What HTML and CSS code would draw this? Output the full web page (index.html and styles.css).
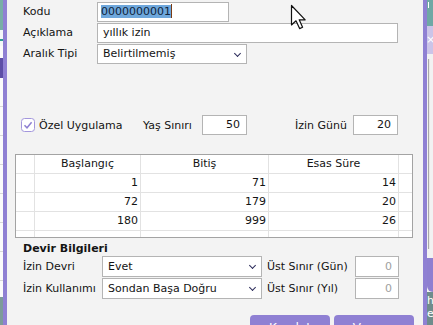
FILE: index.html
```html
<!DOCTYPE html>
<html lang="tr">
<head>
<meta charset="utf-8">
<link rel="stylesheet" href="styles.css">
</head>
<body>
<div class="screen">
  <div class="app-left">
    <div class="al-teal"></div>
    <div class="al-white"><div class="al-line"></div></div>
    <div class="al-purple"></div>
    <div class="al-list"></div>
    <div class="al-foot"></div>
  </div>
  <div class="dialog">
    <div class="fields">
      <span class="lbl">Kodu</span>
      <div class="input w-kodu"><span class="hl">0000000001</span><span class="caret"></span></div>
      <span class="lbl">Açıklama</span>
      <div class="input w-acik">yıllık izin</div>
      <span class="lbl">Aralık Tipi</span>
      <div class="input select w-aralik">Belirtilmemiş<span class="chev"></span></div>
    </div>

    <div class="opts">
      <span class="check"><svg viewBox="0 0 14 14" width="14" height="14"><rect x="0.5" y="0.5" width="13" height="13" rx="3" fill="#fff" stroke="#a396dc"/><path d="M3.5 7.2 L6 9.8 L10.6 4.2" fill="none" stroke="#8f80d2" stroke-width="1.5"/></svg></span>
      <span class="opt-lbl">Özel Uygulama</span>
      <span class="yas-lbl">Yaş Sınırı</span>
      <div class="input num w-num">50</div>
      <span class="gun-lbl">İzin Günü</span>
      <div class="input num w-num">20</div>
    </div>

    <div class="grid">
      <div class="g-row g-head">
        <div class="c c-ind"></div>
        <div class="c c1 center">Başlangıç</div>
        <div class="c c2 center">Bitiş</div>
        <div class="c c3 center">Esas Süre</div>
        <div class="c c-rest"></div>
      </div>
      <div class="g-row">
        <div class="c c-ind"></div>
        <div class="c c1">1</div>
        <div class="c c2">71</div>
        <div class="c c3">14</div>
        <div class="c c-rest"></div>
      </div>
      <div class="g-row">
        <div class="c c-ind"></div>
        <div class="c c1">72</div>
        <div class="c c2">179</div>
        <div class="c c3">20</div>
        <div class="c c-rest"></div>
      </div>
      <div class="g-row">
        <div class="c c-ind"></div>
        <div class="c c1">180</div>
        <div class="c c2">999</div>
        <div class="c c3">26</div>
        <div class="c c-rest"></div>
      </div>
      <div class="g-row g-empty">
        <div class="c c-ind"></div>
        <div class="c c1"></div>
        <div class="c c2"></div>
        <div class="c c3"></div>
        <div class="c c-rest"></div>
      </div>
    </div>

    <div class="section">Devir Bilgileri</div>
    <div class="devir">
      <span class="lbl">İzin Devri</span>
      <div class="input select w-devir">Evet<span class="chev"></span></div>
      <span class="ust-lbl">Üst Sınır (Gün)</span>
      <div class="input num zero w-ust">0</div>
      <span class="lbl">İzin Kullanımı</span>
      <div class="input select w-devir">Sondan Başa Doğru<span class="chev"></span></div>
      <span class="ust-lbl">Üst Sınır (Yıl)</span>
      <div class="input num zero w-ust">0</div>
    </div>

    <div class="buttons">
      <div class="btn">Kaydet</div>
      <div class="btn">Vazgeç</div>
    </div>
  </div>
  <div class="app-right">
    <div class="ar-teal"><span class="ar-tick"></span></div>
    <div class="ar-lav">×</div>
    <div class="ar-body"><div class="ar-line"></div></div>
    <div class="ar-purple"></div>
    <div class="ar-foot">h<br>e</div>
  </div>
  <svg class="cursor" width="20" height="28" viewBox="0 0 20 28">
    <path d="M1.5 1.5 L1.5 21 L6 16.8 L9.6 24.6 L12.6 23.2 L9.2 15.8 L15.2 15.8 Z" fill="#fff" stroke="#111" stroke-width="1.2" stroke-linejoin="round"/>
  </svg>
</div>
</body>
</html>
```
FILE: styles.css
```css
* { box-sizing: border-box; }
html, body { margin: 0; padding: 0; }
body {
  width: 433px;
  height: 325px;
  overflow: hidden;
  font-family: "DejaVu Sans", Verdana, sans-serif;
  font-size: 11px;
  color: #141414;
  background: #f3f3f3;
}
.screen {
  position: relative;
  display: flex;
  width: 433px;
  height: 325px;
}

/* app background strips */
.app-left {
  width: 3px;
  flex-shrink: 0;
  display: flex;
  flex-direction: column;
  background: #fbfbfb;
}
.al-teal { height: 30px; background: #78aea6; }
.al-white { height: 16px; background: #f4f8f8; padding-top: 9px; }
.al-line { height: 2px; background: #2f9d94; }
.al-purple { height: 20px; margin-top: 12px; background: #5c4ea6; }
.al-list {
  flex: 1;
  background: repeating-linear-gradient(#fbfbfb 0 28px, #d8d8d8 28px 29px);
}
.al-foot { height: 28px; background: #7c9b9a; }

.app-right {
  width: 6px;
  flex-shrink: 0;
  display: flex;
  flex-direction: column;
}
.ar-teal { height: 26px; background: #6fa8a5; padding: 2px 0 0 1px; }
.ar-tick { display: block; width: 1px; height: 6px; background: #fff; }
.ar-lav {
  height: 28px;
  background: #cbc4e8;
  color: #fff;
  font-size: 11px;
  line-height: 28px;
  overflow: hidden;
  text-indent: -1px;
}
.ar-body { height: 204px; background: #f2f2f2; padding: 5px 0 0 1px; }
.ar-line { width: 2px; height: 190px; border-left: 1px solid #a8a8a8; background: #e8e8e8; }
.ar-purple { height: 34px; background: #8e7fd0; border-radius: 0 0 0 6px; }
.ar-foot {
  flex: 1;
  background: #6f8c8c;
  color: #fff;
  font-size: 11px;
  line-height: 13px;
  padding-top: 2px;
  overflow: hidden;
}

/* dialog */
.dialog {
  width: 424px;
  height: 325px;
  flex-shrink: 0;
  border-left: 4px solid #8f80d3;
  border-right: 4px solid #8f80d3;
  background: #f3f3f3;
  padding-top: 2px;
  display: flex;
  flex-direction: column;
  overflow: hidden;
}
.dialog > * { flex-shrink: 0; }

.input {
  height: 20px;
  background: #fff;
  border: 1px solid #b4b4b4;
  padding: 0 5px;
  line-height: 18px;
  white-space: nowrap;
  overflow: hidden;
  position: relative;
}
.select { padding-right: 18px; }
.chev {
  position: absolute;
  right: 6px;
  top: 6px;
  width: 5px;
  height: 5px;
  border-right: 1px solid #2b2b5a;
  border-bottom: 1px solid #2b2b5a;
  transform: rotate(45deg);
}
.num { text-align: right; padding-right: 6px; }
.zero { color: #a0a0a0; }

.fields {
  display: grid;
  grid-template-columns: 74px auto;
  row-gap: 1px;
  padding-left: 16px;
  justify-items: start;
  align-items: center;
}
.lbl { line-height: 20px; white-space: nowrap; }
.w-kodu { width: 132px; padding-left: 3px; }
.w-acik { width: 301px; }
.w-aralik { width: 150px; }
.hl { background: #6ea7dc; color: #10233a; }
.caret { display: inline-block; width: 1px; height: 14px; background: #7a3b14; vertical-align: -3px; }

.opts {
  display: flex;
  align-items: center;
  margin-top: 51px;
  padding-left: 14px;
  height: 20px;
  white-space: nowrap;
}
.check { width: 14px; height: 14px; display: flex; margin-right: 4px; flex-shrink: 0; }
.opt-lbl { width: 104px; flex-shrink: 0; }
.yas-lbl { width: 59px; flex-shrink: 0; }
.w-num { width: 45px; flex-shrink: 0; }
.gun-lbl { margin-left: 48px; width: 58px; flex-shrink: 0; }

/* grid */
.grid {
  margin-top: 19px;
  margin-left: 8px;
  width: 398px;
  height: 84px;
  border: 1px solid #a3a3a3;
  background: #fff;
  overflow: hidden;
  display: flex;
  flex-direction: column;
}
.g-row {
  display: flex;
  height: 19px;
  flex-shrink: 0;
  border-bottom: 1px solid #e2e2e2;
}
.g-empty { border-bottom: none; flex: 1; }
.c {
  border-right: 1px solid #e2e2e2;
  line-height: 18px;
  text-align: right;
  padding-right: 2px;
  white-space: nowrap;
  flex-shrink: 0;
}
.center { text-align: center; padding-right: 0; }
.c-ind { width: 19px; }
.c1 { width: 106px; }
.c2 { width: 128px; }
.c3 { width: 130px; }
.c-rest { flex: 1; border-right: none; }

.section {
  font-weight: bold;
  margin-top: 4px;
  padding-left: 16px;
  line-height: 13px;
  height: 14px;
}

.devir {
  display: grid;
  grid-template-columns: 79px 160px 93px 44px;
  row-gap: 1px;
  padding-left: 16px;
  align-items: center;
  height: 43px;
  white-space: nowrap;
}
.w-devir { width: 160px; height: 21px; line-height: 19px; }
.ust-lbl { padding-left: 5px; }
.w-ust { width: 44px; height: 21px; line-height: 19px; }

.buttons {
  display: flex;
  gap: 4px;
  margin-top: 16px;
  padding-left: 243px;
}
.btn {
  width: 80px;
  height: 24px;
  background: #8f80d3;
  border-radius: 4px 4px 0 0;
  color: #fff;
  font-size: 12px;
  text-align: center;
  line-height: 14px;
  padding-top: 6px;
}

.cursor {
  position: absolute;
  left: 290px;
  top: 4px;
}
```
